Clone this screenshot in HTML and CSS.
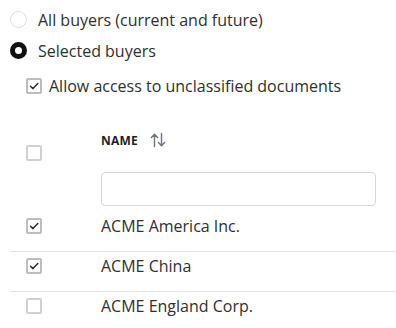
FILE: index.html
```html
<!DOCTYPE html>
<html>
<head>
<meta charset="utf-8">
<link rel="stylesheet" href="styles.css">
</head>
<body>
<div class="options">
  <label class="opt"><span class="radio"></span><span>All buyers (current and future)</span></label>
  <label class="opt"><span class="radio on"></span><span>Selected buyers</span></label>
  <label class="opt sub"><span class="cb checked"><svg viewBox="0 0 12 12"><path d="M2.5 6.2 L5 8.6 L9.8 3.6" /></svg></span><span>Allow access to unclassified documents</span></label>
</div>
<div class="table">
  <div class="thead">
    <div class="c1"><span class="cb hcb"></span></div>
    <div class="c2">
      <div class="th"><span class="name">NAME</span>
        <svg class="sort" viewBox="0 0 16 16"><path d="M4.5 14.5 V2.5 M1.5 5.5 L4.5 2.2 L7.5 5.5 M11.5 1.5 V13.5 M8.5 10.5 L11.5 13.8 L14.5 10.5" /></svg>
      </div>
      <div class="search"></div>
    </div>
  </div>
  <div class="row"><div class="c1"><span class="cb checked"><svg viewBox="0 0 12 12"><path d="M2.5 6.2 L5 8.6 L9.8 3.6" /></svg></span></div><div class="c2">ACME America Inc.</div></div>
  <div class="row"><div class="c1"><span class="cb checked"><svg viewBox="0 0 12 12"><path d="M2.5 6.2 L5 8.6 L9.8 3.6" /></svg></span></div><div class="c2">ACME China</div></div>
  <div class="row"><div class="c1"><span class="cb"></span></div><div class="c2">ACME England Corp.</div></div>
</div>
</body>
</html>
```
FILE: styles.css
```css
html, body {
  margin: 0;
  padding: 0;
  background: #fff;
  overflow: hidden;
}
body {
  font-family: "Open Sans", "Noto Sans", sans-serif;
  font-size: 16px;
  color: #2f2f2f;
  width: 396px;
  height: 328px;
}
.options {
  padding-top: 4px;
  padding-left: 10px;
}
.opt {
  display: flex;
  align-items: center;
  height: 31px;
  gap: 11px;
}
.opt.sub {
  margin-top: 4px;
  padding-left: 16px;
  gap: 7px;
}
.radio {
  width: 17px;
  height: 17px;
  box-sizing: border-box;
  border-radius: 50%;
  border: 1px solid #dcdcdc;
  background: #fff;
  flex: none;
}
.radio.on {
  border: 5.5px solid #111;
}
.cb {
  width: 16px;
  height: 16px;
  box-sizing: border-box;
  border: 2px solid #cfd1d4;
  border-radius: 2px;
  background: #fff;
  display: flex;
  align-items: center;
  justify-content: center;
  flex: none;
}
.cb.checked {
  border-color: #bdbdbd;
}
.cb svg {
  width: 12px;
  height: 12px;
}
.cb svg path {
  fill: none;
  stroke: #2a2a3a;
  stroke-width: 1.5;
  stroke-linecap: round;
  stroke-linejoin: round;
}
.table {
  padding-left: 10px;
}
.thead {
  display: grid;
  grid-template-columns: 91px 1fr;
  margin-top: 27px;
}
.thead .c1 {
  padding-left: 16px;
  padding-top: 17px;
}
.th {
  display: flex;
  align-items: center;
  height: 24px;
  gap: 12px;
}
.name {
  font-weight: 700;
  font-size: 12px;
  color: #1f1f2a;
  letter-spacing: 0.2px;
}
.sort {
  width: 16px;
  height: 16px;
}
.sort path {
  fill: none;
  stroke: #6b7482;
  stroke-width: 1.4;
  stroke-linecap: round;
  stroke-linejoin: round;
}
.search {
  margin-top: 20px;
  width: 275px;
  height: 34px;
  box-sizing: border-box;
  border: 1px solid #d6d6d6;
  border-radius: 4px;
}
.row {
  display: grid;
  grid-template-columns: 91px 1fr;
  height: 40px;
  box-sizing: border-box;
  border-bottom: 1px solid #e2e2e2;
}
.thead + .row {
  margin-top: 6px;
}
.row .c1 {
  padding-left: 16px;
  padding-top: 6px;
}
.row .c2 {
  padding-top: 2px;
  line-height: 24px;
}
```
